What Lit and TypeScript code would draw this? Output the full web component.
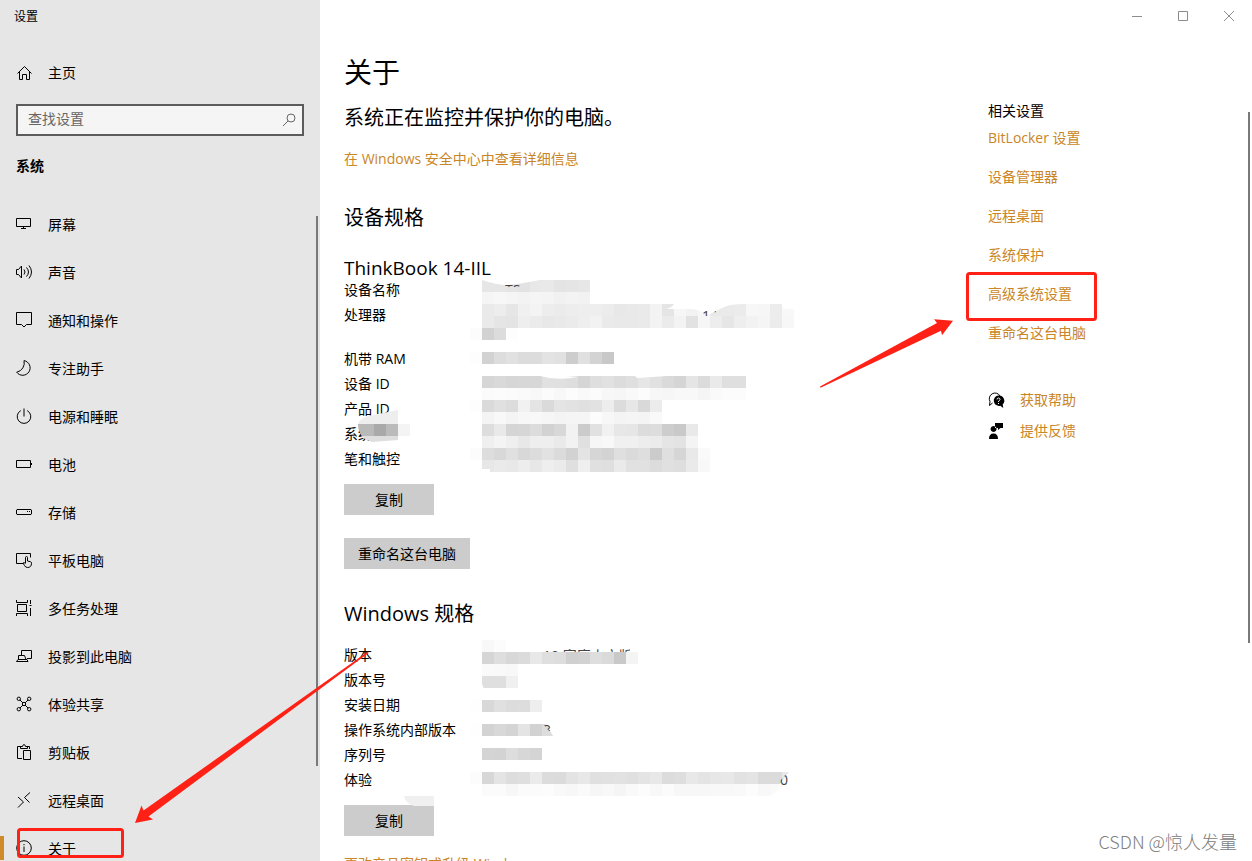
import { LitElement, html, svg, css } from "lit";
import { customElement, property } from "lit/decorators.js";

/** One run of mosaic tiles: left edge, top edge, and a grey level per 12px tile. */
interface Run { x: number; y: number; tones: string; }

const icons: Record<string, unknown> = {
  home: svg`<path d="M1.500 8.500 8.500 1.500 15.500 8.500M3.500 7v7.500h3v-5h4v5h3V7"/>`,
  screen: svg`<path d="M.5 2.500h14v8H.5zM7.500 10.500v2M5 12.500h5"/>`,
  sound: svg`<path d="M.5 5.500h2l3-3.500v12l-3-3.500h-2zM8 5.500q2 2.500 0 5M10.500 3.500q4 4.500 0 9M13 1.500q5 6.500 0 13"/>`,
  notice: svg`<path d="M.5.5h15v12h-5L8 15l-2.500-2.500h-5z"/>`,
  moon: svg`<path d="M8 .6a7.400 7.400 0 1 1-7.300 11.600A9.500 9.500 0 0 0 8 .6z"/>`,
  power: svg`<path d="M8 .5v8M4.800 2.600a6.800 6.800 0 1 0 6.400 0"/>`,
  battery: svg`<path d="M.5 4.500h14v7H.5zM15.500 7v2"/>`,
  storage: svg`<path d="M1 5.500h14l.5.5v4l-.5.5H1l-.5-.5V6zM11 7.500h1M13 7.500h1"/>`,
  tablet: svg`<path d="M7 11.500H.5v-10h14v4M9.500 11V5.500q0-1 1-1t1 1V9l3 .7q1 .3 1 1.500 0 4.300-4 4.300-2 0-3-2l-1.500-2.500q1-1 2.500.5"/>`,
  multitask: svg`<path d="M.5 0v2.500h11V0M1.500 4.500h9v7h-9zM.5 16v-2.500h11V16M14.500 0v4M14.500 8v8"/><path d="M13.500 5.500h2"/>`,
  project: svg`<path d="M5.500 8V2.500h10v8H11M2.500 11.500v-4h6l1.500 4M.5 13.500l1.500-2h9l1 2z"/>`,
  share: svg`<circle cx="2.800" cy="2.800" r="1.700"/><circle cx="13.200" cy="2.800" r="1.700"/><circle cx="2.800" cy="13.200" r="1.700"/><circle cx="13.200" cy="13.200" r="1.700"/><circle cx="8" cy="8" r="1.700"/><path d="m4 4 2.800 2.800M12 4 9.200 6.800M4 12l2.800-2.800M12 12 9.200 9.200"/>`,
  clipboard: svg`<path d="M6 14.500H1.500v-12H5M11 2.500h2.500V5M4.500 4.500v-2h2Q7 .5 8 .5t1.500 2h2v2zM7.500 6.500h7v9h-7z"/>`,
  remote: svg`<path d="m2 5 5.500 5L2 15.500M14 .5 8.500 5.500l5 5"/>`,
  about: svg`<circle cx="8" cy="8" r="7.300"/><path d="M8 6.500V12M8 4v1.200"/>`,
  search: svg`<circle cx="9" cy="5" r="4"/><path d="M6 8 1 13"/>`,
  minimize: svg`<path d="M0 5.500h10"/>`,
  maximize: svg`<path d="M.5.5h9v9h-9z"/>`,
  close: svg`<path d="m0 0 10 10M10 0 0 10"/>`,
  help: svg`<path d="M4.500 11 1.500 13.500 2 9.500A5.500 5.500 0 1 1 12 4"/><path class="solid" d="M10.500 3.500a5.200 5.200 0 1 0 1.800 10.200l3 2.300-.6-3.600A5.200 5.200 0 0 0 10.500 3.500z"/><path class="knock" d="M9 7.500q0-1.500 1.500-1.500T12 7.500q0 .8-1.500 1.700v.8M10.500 11v1"/>`,
  feedback: svg`<path class="solid" d="M7 0h8v5h-2.500L10 7V5H7zM1 16q0-5.500 4.500-5.500T10 16zM5.500 3a3 3 0 1 0 .1 0z"/>`,
};

@customElement("line-icon")
class LineIcon extends LitElement {
  @property() name = "";
  @property({ type: Number }) size = 16;
  static styles = css`
    :host { display: block; flex: none; }
    svg { display: block; overflow: visible; fill: none; stroke: currentColor; stroke-width: 1; }
    .solid { fill: currentColor; stroke: none; }
    .knock { stroke: #fff; }
  `;
  render() {
    return html`<svg width=${this.size} height=${this.size} viewBox="0 0 ${this.size} ${this.size}" aria-hidden="true">${icons[this.name]}</svg>`;
  }
}

const tiles = (runs: Run[]) =>
  runs.map((r) =>
    r.tones.split(" ").map(
      (t, i) => svg`<rect x=${r.x + i * 12} y=${r.y} width="12" height="12" fill=${"#" + t + t + t}></rect>`
    )
  );

const deviceRuns: Run[] = [
  { x: 482, y: 280, tones: "e6 e6 e4 e2 e8 e9 e4 e5 e7" },
  { x: 482, y: 292, tones: "f5 f7 f5 f3 f5 f4 f1 f3 f2" },
  { x: 482, y: 304, tones: "ea ed e6 f0 f3 ed eb ed ee ee ec e8 e9 ea f3 e5 f6 f2 f7 e9 ea eb f7 f6 ec f8" },
  { x: 482, y: 316, tones: "ea e5 e4 ee eb e8 e9 eb ee f2 ea e9 e9 ea f3 eb f3 e2 f6 ed e6 ee f2 f5 ec f7" },
  { x: 470, y: 328, tones: "fc d2 dc fd" },
  { x: 470, y: 352, tones: "fd d2 dd e1 dc dc e3 e1 cd e0 d3 c8" },
  { x: 482, y: 376, tones: "d6 d9 d6 d7 d7 e1 e0 de d5 de e1 dc df e6 e1 da d5 e5 db ea df df" },
  { x: 482, y: 388, tones: "fb fc fb fa f8 fb f8 fc f9 fb f7 f6 f9 fc f7 f6 f8 f8 f5 fa fc fc" },
  { x: 470, y: 400, tones: "fd da e0 dc f1 e4 da e4 e2 e0 e2 ed dc e7 d9 ec" },
  { x: 482, y: 412, tones: "f4 f8 f4 f7 f8 f6 f4 f5 f5 fc f7 f4 f5 f4 f9" },
  { x: 482, y: 424, tones: "dd e9 d5 d6 dc d2 d8 f2 cb e1 f1 e7 e6 dc dd cd c9 e9" },
  { x: 482, y: 436, tones: "ef f4 ef e8 ee ee ea f2 e0 f6 f8 f0 f0 ed eb e5 e3 f4" },
  { x: 470, y: 448, tones: "fc dd d8 e0 d8 dc e2 db d2 e4 d6 d3 df da de cb df d6 e9 fa" },
  { x: 482, y: 460, tones: "e7 ea e8 ed e7 ee eb df ef e0 df ea e1 e1 dc e0 de ea f8" },
];

const windowsRuns: Run[] = [
  { x: 482, y: 640, tones: "f8 fc" },
  { x: 482, y: 652, tones: "d5 de d8 db e8 df dd d0 d2 de da c9 f4" },
  { x: 482, y: 664, tones: "fa f9 f8" },
  { x: 482, y: 676, tones: "df df f0" },
  { x: 470, y: 700, tones: "fe d8 e0 dc dd ee" },
  { x: 470, y: 724, tones: "fe d3 d8 d4 e4 d2" },
  { x: 482, y: 748, tones: "d4 d3 dd d7 d4" },
  { x: 470, y: 772, tones: "fc d7 e4 dd df eb dc db e3 e8 e0 e1 e2 e0 e4 e8 dc de e8 e4 e7 e8 e2 e4 db db e8" },
  { x: 482, y: 784, tones: "fb fb f7 fb fb fc f9 f7 fa f6 f8 f5 f9 fc f8 fb f7 f7 f7 f8 f8 f9 fc f8 fa" },
];

@customElement("app-root")
class AppRoot extends LitElement {
  static styles = css`
    :host {
      display: grid;
      grid-template-columns: 320px minmax(0, 1fr);
      position: relative;
      height: 100vh;
      overflow: hidden;
      background: #fff;
      color: #000;
      font: 14px/20px "Open Sans", "Noto Sans CJK SC", sans-serif;
    }
    * { box-sizing: border-box; }
    h1, h2, h3, p, dl, dd, ul { margin: 0; padding: 0; font-weight: 400; }
    ul { list-style: none; }
    a { color: #c98526; text-decoration: none; }
    button { font: inherit; color: inherit; border: 0; padding: 0; }

    aside { position: relative; background: #e6e6e6; height: 100vh; overflow: hidden; }
    .caption { height: 33px; padding-left: 14px; font-size: 12px; line-height: 33px; }
    .home { display: flex; align-items: center; gap: 16px; height: 48px; margin-top: 16px; padding-left: 16px; color: #000; }
    .search { display: flex; align-items: center; height: 32px; margin: 7px 16px 0; padding: 0 6px 0 10px; border: 2px solid #5c5c5c; background: #f5f5f5; color: #666; }
    .search input { flex: 1; min-width: 0; border: 0; padding: 0 0 2px; outline: 0; background: none; font: inherit; line-height: 20px; color: #000; }
    .search input::placeholder { color: #666; opacity: 1; }
    .group { margin: 20px 0 24px 16px; font-size: 14px; line-height: 20px; font-weight: 700; }
    .entry { display: flex; align-items: center; gap: 16px; height: 48px; padding-left: 16px; color: #000; position: relative; }
    .entry span { padding-top: 2px; }
    .entry.current::before { content: ""; position: absolute; left: 0; top: 12px; width: 4px; height: 24px; background: #cf8a2a; }
    .thumb { position: absolute; width: 2px; background: #7a7a7a; }
    .thumb.side { right: 2px; top: 216px; height: 550px; }
    .thumb.page { right: 2px; top: 112px; height: 531px; }

    main { display: flex; flex-direction: column; min-width: 0; height: 100vh; overflow: hidden; }
    .controls { display: flex; justify-content: flex-end; flex: none; height: 32px; color: #8c8c8c; }
    .controls button { display: grid; place-items: center; width: 46px; background: none; }
    .columns { display: grid; grid-template-columns: minmax(0, 1fr) 264px; padding: 22px 0 0 24px; }
    h1 { font-size: 28px; line-height: 36px; }
    .lead { margin-top: 14px; font-size: 20px; line-height: 28px; }
    .more { display: block; margin-top: 17px; }
    h2 { margin-top: 35px; font-size: 20px; line-height: 28px; }
    h3 { margin-top: 26px; font-size: 19px; line-height: 20px; }
    .specs { position: relative; }
    .row { display: grid; grid-template-columns: 138px 1fr; min-height: 25px; line-height: 24px; }
    .row.tall { min-height: 44px; }
    .mosaic { position: absolute; left: 0; top: 0; overflow: visible; pointer-events: none; }
    .mosaic text { font-size: 14px; fill: #444; }
    .push { display: block; height: 31px; margin-top: 12px; background: #ccc; line-height: 31px; }
    .copy { width: 90px; }
    .rename { width: 126px; margin-top: 23px; }
    .second { margin-top: 31px; }
    .second + .specs { margin-top: 15px; }
    .after { display: block; margin-top: 18px; }
    .related { padding-top: 47px; }
    .related li { margin-bottom: 19px; }
    .related p { margin-bottom: 7px; }
    .support { display: grid; gap: 11px; margin-top: 47px; }
    .support a { display: flex; align-items: center; gap: 16px; }
    .support line-icon { color: #000; }

    .marks { position: absolute; left: 0; top: 0; pointer-events: none; fill: none; stroke: #ff2116; stroke-width: 3; }
    .marks .arrow { fill: #ff2116; stroke: none; }
    .credit { position: absolute; right: 15px; bottom: 8px; font-size: 18px; line-height: 24px; font-family: "Noto Sans CJK SC", sans-serif; font-weight: 300; color: #808080; }
  `;

  private nav = [
    ["screen", "屏幕"], ["sound", "声音"], ["notice", "通知和操作"], ["moon", "专注助手"],
    ["power", "电源和睡眠"], ["battery", "电池"], ["storage", "存储"], ["tablet", "平板电脑"],
    ["multitask", "多任务处理"], ["project", "投影到此电脑"], ["share", "体验共享"],
    ["clipboard", "剪贴板"], ["remote", "远程桌面"], ["about", "关于"],
  ];
  private device = ["设备名称", "处理器", "机带 RAM", "设备 ID", "产品 ID", "系统类型", "笔和触控"];
  private windows = ["版本", "版本号", "安装日期", "操作系统内部版本", "序列号", "体验"];
  private related = ["BitLocker 设置", "设备管理器", "远程桌面", "系统保护", "高级系统设置", "重命名这台电脑"];

  private row = (label: string) => html`
    <div class="row ${label === "处理器" ? "tall" : ""}"><dt>${label}</dt><dd></dd></div>`;

  private deviceMosaic() {
    return html`<svg class="mosaic" width="480" height="200" viewBox="344 278 480 200" aria-hidden="true">
      <defs>
        <clipPath id="name"><path d="M503 285h22l-6 2h-10z"></path></clipPath>
        <clipPath id="cpu"><path d="M700 310h16v2l-8 4h-8z"></path></clipPath>
        <clipPath id="blob"><path d="M398 410v30q-14 1-26 2-14-4-14-18 2-6 10-8z"></path></clipPath>
      </defs>
      ${tiles(deviceRuns)}
      <path fill="#fff" d="M482 280q14 5 26 5 12-1 32-5zM674 304h70q-14 0-20 3l-16 8q-10-6-16-6h-26q6-1 8-5zM782 304h14v5h-13zM538 376h28l12 1q-20 4-38-1zM635 376h32l-30 2zM482 469h8v4h-8z"></path>
      <text x="505" y="295" clip-path="url(#name)">TS</text>
      <text x="702" y="321" clip-path="url(#cpu)">1.3</text>
      <g clip-path="url(#blob)">
        <rect x="356" y="410" width="44" height="14" fill="#eeeeee"></rect>
        <rect x="356" y="424" width="18" height="12" fill="#b9b9b9"></rect>
        <rect x="374" y="424" width="12" height="12" fill="#a9a9a9"></rect>
        <rect x="386" y="424" width="12" height="12" fill="#bbbbbb"></rect>
        <rect x="356" y="436" width="44" height="8" fill="#dedede"></rect>
      </g>
      <rect x="398" y="424" width="12" height="12" fill="#f4f4f4"></rect>
      <rect x="398" y="436" width="4" height="6" fill="#fff"></rect>
    </svg>`;
  }

  private windowsMosaic() {
    return html`<svg class="mosaic" width="480" height="165" viewBox="344 643 480 165" aria-hidden="true">
      <defs>
        <clipPath id="edition"><rect x="505" y="649" width="125" height="3"></rect></clipPath>
        <clipPath id="build"><path d="M543 724h11v7h-5z"></path></clipPath>
        <clipPath id="pack"><path d="M779 786v-4l8-9h6v13z"></path></clipPath>
      </defs>
      ${tiles(windowsRuns)}
      <path fill="#dddddd" d="M542 724h4l7 12h-11z"></path>
      <path fill="#fff" d="M789 772l-9 12v12h16v-24zM782 784q-6 11-14 12h14z"></path>
      <path fill="#fff" d="M482 684h-1v5h3z"></path>
      <text x="543" y="661" clip-path="url(#edition)">10 家庭中文版</text>
      <text x="543" y="735" clip-path="url(#build)">3</text>
      <text x="780" y="785" clip-path="url(#pack)">0</text>
      <path fill="#f0f0f0" d="M404 796h30v10h-20q-9-3-10-10z"></path>
    </svg>`;
  }

  render() {
    return html`
      <aside>
        <div class="caption">设置</div>
        <a class="home" href="#home"><line-icon name="home"></line-icon>主页</a>
        <div class="search">
          <input type="text" aria-label="查找设置" placeholder="查找设置">
          <line-icon name="search" .size=${14}></line-icon>
        </div>
        <h2 class="group">系统</h2>
        <nav>
          ${this.nav.map(([icon, label]) => html`
            <a class="entry ${icon === "about" ? "current" : ""}" href="#${icon}"><line-icon name=${icon}></line-icon><span>${label}</span></a>`)}
        </nav>
        <div class="thumb side"></div>
      </aside>
      <main>
        <div class="controls">
          <button aria-label="最小化"><line-icon name="minimize" .size=${10}></line-icon></button>
          <button aria-label="最大化"><line-icon name="maximize" .size=${10}></line-icon></button>
          <button aria-label="关闭"><line-icon name="close" .size=${10}></line-icon></button>
        </div>
        <div class="columns">
          <section>
            <h1>关于</h1>
            <p class="lead">系统正在监控并保护你的电脑。</p>
            <a class="more" href="#security">在 Windows 安全中心中查看详细信息</a>
            <h2>设备规格</h2>
            <h3>ThinkBook 14-IIL</h3>
            <dl class="specs">${this.device.map(this.row)}${this.deviceMosaic()}</dl>
            <button class="push copy">复制</button>
            <button class="push rename">重命名这台电脑</button>
            <h2 class="second">Windows 规格</h2>
            <dl class="specs">${this.windows.map(this.row)}${this.windowsMosaic()}</dl>
            <button class="push copy">复制</button>
            <a class="after" href="#upgrade">更改产品密钥或升级 Windows</a>
          </section>
          <section class="related">
            <p>相关设置</p>
            <ul>${this.related.map((t) => html`<li><a href="#related">${t}</a></li>`)}</ul>
            <div class="support">
              <a href="#help"><line-icon name="help"></line-icon>获取帮助</a>
              <a href="#feedback"><line-icon name="feedback"></line-icon>提供反馈</a>
            </div>
          </section>
        </div>
      </main>
      <div class="thumb page"></div>
      <svg class="marks" width="1252" height="861" viewBox="0 0 1252 861" aria-hidden="true">
        <rect x="967.500" y="273.500" width="128" height="46" rx="2"></rect>
        <rect x="18.500" y="829.500" width="104" height="27" rx="2"></rect>
        <path class="arrow" d="M820 386.500 937 323l-3-3.700 19 1.500-11 14.500-1-4.500-120.500 57z"></path>
        <path class="arrow" d="M368 651.500 143.500 810.500l-2-5L135 823l18-3.500-4.500-3L368.500 653z"></path>
      </svg>
      <div class="credit">CSDN @惊人发量</div>
    `;
  }
}
